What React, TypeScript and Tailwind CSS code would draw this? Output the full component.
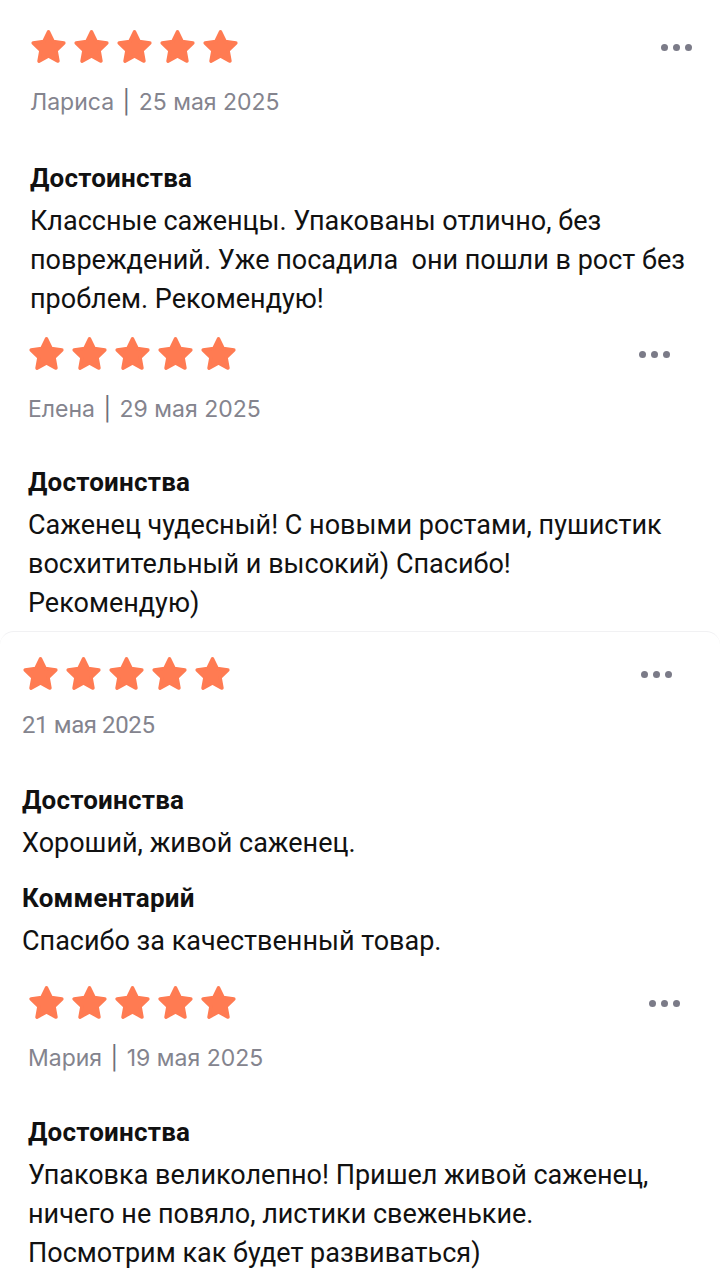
const Star = () => (
    <svg viewBox="0 0 24 24" className="w-[37px] h-[37px]">
        <path
            d="M12 2.5L15.06 8.79 21.99 9.76 16.95 14.61 18.17 21.49 12 18.2 5.83 21.49 7.05 14.61 2.01 9.76 8.94 8.79z"
            fill="#ff7b52"
            stroke="#ff7b52"
            strokeWidth="2.2"
            strokeLinejoin="round"
        />
    </svg>
)

const Dots = () => (
    <div className="flex gap-[5px] items-center">
        <span className="w-[7px] h-[7px] rounded-full bg-[#7b7b88]"></span>
        <span className="w-[7px] h-[7px] rounded-full bg-[#7b7b88]"></span>
        <span className="w-[7px] h-[7px] rounded-full bg-[#7b7b88]"></span>
    </div>
)

type Block = { title: string; lines: string[]; gap: string }

type ReviewProps = {
    box: string;
    author?: string;
    date: string;
    blocks: Block[];
}

const Review = ({ box, author, date, blocks }: ReviewProps) => {
    return (
        <div className={box}>
            <div className="flex items-center justify-between h-[37px]">
                <div className="flex gap-[6px]">
                    <Star /><Star /><Star /><Star /><Star />
                </div>
                <div className="pt-[2px]"><Dots /></div>
            </div>
            {author ? (
                <div className="mt-[22px] h-[30px] leading-[30px] text-[23px] text-[#84848e] font-['Inter',sans-serif]">
                    {author} <span className="text-[#6f6f7a] mx-[2px]">|</span> {date}
                </div>
            ) : (
                <div className="mt-[18px] h-[30px] leading-[30px] text-[24px] text-[#84848e] font-['Roboto',sans-serif] tracking-[-0.4px]">
                    {date}
                </div>
            )}
            {blocks.map(b => (
                <div key={b.title} className={b.gap}>
                    <div className="h-[32px] leading-[32px] text-[26px] font-bold text-[#111] font-['Roboto',sans-serif] tracking-[0.2px]">{b.title}</div>
                    <div className="mt-[8px] text-[27px] leading-[39px] text-[#111] font-['Roboto',sans-serif] whitespace-pre-wrap">
                        {b.lines.map(l => <div key={l}>{l}</div>)}
                    </div>
                </div>
            ))}
        </div>
    )
}

export default function App() {
    return (
        <div className="w-[720px] h-[1280px] bg-white overflow-hidden">
            <Review
                box="pt-[28px] pl-[30px] pr-[28px]"
                author="Лариса"
                date="25 мая 2025"
                blocks={[{
                    title: "Достоинства",
                    gap: "mt-[45px]",
                    lines: [
                        "Классные саженцы. Упакованы отлично, без",
                        "повреждений. Уже посадила  они пошли в рост без",
                        "проблем. Рекомендую!",
                    ],
                }]}
            />
            <Review
                box="pt-[16px] pl-[28px] pr-[50px]"
                author="Елена"
                date="29 мая 2025"
                blocks={[{
                    title: "Достоинства",
                    gap: "mt-[42px]",
                    lines: [
                        "Саженец чудесный! С новыми ростами, пушистик",
                        "восхитительный и высокий) Спасибо!",
                        "Рекомендую)",
                    ],
                }]}
            />
            <Review
                box="mt-[8px] pt-[23px] pl-[22px] pr-[48px] border-t border-[#f1f1f3] rounded-t-[14px]"
                date="21 мая 2025"
                blocks={[
                    { title: "Достоинства", gap: "mt-[44px]", lines: ["Хороший, живой саженец."] },
                    { title: "Комментарий", gap: "mt-[19px]", lines: ["Спасибо за качественный товар."] },
                ]}
            />
            <Review
                box="pt-[23px] pl-[28px] pr-[40px]"
                author="Мария"
                date="19 мая 2025"
                blocks={[{
                    title: "Достоинства",
                    gap: "mt-[43px]",
                    lines: [
                        "Упаковка великолепно! Пришел живой саженец,",
                        "ничего не повяло, листики свеженькие.",
                        "Посмотрим как будет развиваться)",
                    ],
                }]}
            />
        </div>
    )
}
